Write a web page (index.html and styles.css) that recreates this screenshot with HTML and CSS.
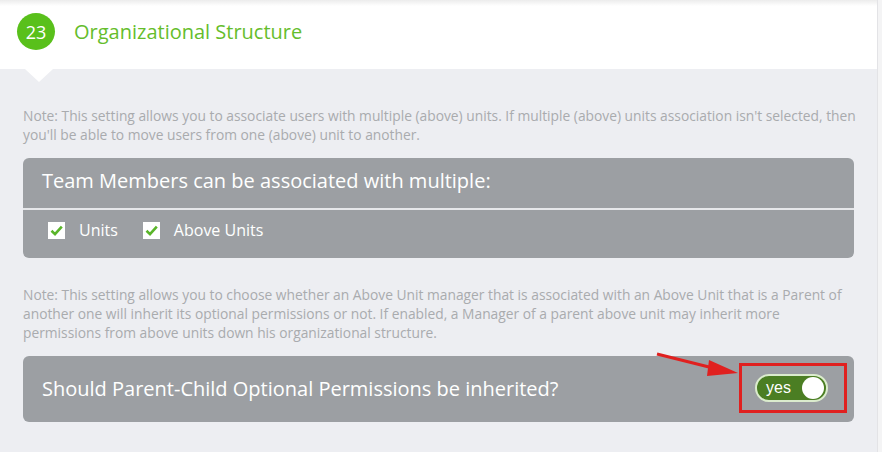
FILE: index.html
```html
<!DOCTYPE html>
<html lang="en">
<head>
    <meta charset="UTF-8">
    <meta name="viewport" content="width=device-width, initial-scale=1.0">
    <title>Organizational Structure</title>
    <link rel="stylesheet" href="styles.css">
</head>
<body>
    <div class="card">
        <div class="card-header">
            <span class="step">23</span>
            <h2>Organizational Structure</h2>
            <span class="notch"></span>
        </div>
        <div class="card-body">
            <p class="note note-first">Note: This setting allows you to associate users with multiple (above) units. If multiple (above) units association isn't selected, then you'll be able to move users from one (above) unit to another.</p>
            <div class="panel">
                <div class="panel-title">Team Members can be associated with multiple:</div>
                <div class="panel-options">
                    <label class="check"><span class="box"><svg viewBox="0 0 17 17" width="17" height="17"><path d="M3.5 8.8 L7 12.2 L13.8 4.6" fill="none" stroke="#5ab52a" stroke-width="2.6"/></svg></span>Units</label>
                    <label class="check"><span class="box"><svg viewBox="0 0 17 17" width="17" height="17"><path d="M3.5 8.8 L7 12.2 L13.8 4.6" fill="none" stroke="#5ab52a" stroke-width="2.6"/></svg></span>Above Units</label>
                </div>
            </div>
            <p class="note note-second">Note: This setting allows you to choose whether an Above Unit manager that is associated with an Above Unit that is a Parent of another one will inherit its optional permissions or not. If enabled, a Manager of a parent above unit may inherit more permissions from above units down his organizational structure.</p>
            <div class="panel panel-row">
                <div class="panel-title">Should Parent-Child Optional Permissions be inherited?</div>
                <div class="highlight">
                    <div class="toggle">
                        <span>yes</span>
                        <span class="knob"></span>
                    </div>
                </div>
                <svg class="arrow" width="90" height="30" viewBox="0 0 90 30">
                    <line x1="2" y1="2" x2="62" y2="17" stroke="#e0201f" stroke-width="3"/>
                    <polygon points="83,21 54,8 52,24" fill="#e0201f"/>
                </svg>
            </div>
        </div>
    </div>
</body>
</html>
```

FILE: styles.css
```css
body {
    margin: 0;
    padding: 0;
    background: #f4f4f5;
    font-family: 'Open Sans', sans-serif;
}
.card {
    width: 877px;
    border-right: 1px solid #e3e3e6;
    background: #edeef2;
    height: 452px;
}
.card-header {
    position: relative;
    height: 69px;
    background: linear-gradient(#ececec, #ffffff 6px);
    display: flex;
    align-items: center;
    padding-left: 17px;
    box-sizing: border-box;
}
.step {
    width: 38px;
    height: 37px;
    border-radius: 50%;
    background: #59c01b;
    color: white;
    font-size: 18px;
    display: flex;
    justify-content: center;
    align-items: center;
    margin-top: -6px;
}
.card-header h2 {
    margin: -6px 0 0 19px;
    font-size: 20px;
    font-weight: normal;
    color: #65bd2c;
}
.notch {
    position: absolute;
    left: 25px;
    top: 69px;
    width: 0;
    height: 0;
    border-left: 14px solid transparent;
    border-right: 14px solid transparent;
    border-top: 13px solid white;
}
.card-body {
    padding: 37px 23px 0 23px;
}
.note {
    margin: 0;
    font-size: 13.8px;
    line-height: 19px;
    color: #a9abae;
}
.note-first {
    margin-right: -10px;
}
.note-second {
    margin-top: 27px;
}
.panel {
    margin-top: 14px;
    background: #9c9fa3;
    border-radius: 6px;
    color: white;
}
.panel-title {
    font-size: 20px;
    padding: 0 19px;
    height: 50px;
    line-height: 46px;
}
.panel-options {
    border-top: 2px solid #e6e7ea;
    height: 50px;
    display: flex;
    align-items: center;
    padding: 0 0 8px 25px;
    box-sizing: border-box;
    font-size: 16px;
}
.check {
    display: flex;
    align-items: center;
    margin-right: 25px;
}
.box {
    width: 17px;
    height: 17px;
    background: white;
    margin-right: 14px;
    display: flex;
}
.panel-row {
    position: relative;
    height: 66px;
    display: flex;
    align-items: center;
    justify-content: space-between;
}
.panel-row .panel-title {
    height: auto;
    line-height: 26px;
    margin-top: -1px;
}
.highlight {
    border: 3px solid #e0201f;
    width: 108px;
    height: 50px;
    margin-right: 7px;
    margin-top: -2px;
    display: flex;
    align-items: center;
    padding-left: 13px;
    box-sizing: border-box;
}
.toggle {
    width: 73px;
    height: 28px;
    box-sizing: border-box;
    border: 2px solid #dbeccd;
    border-radius: 14px;
    background: #4b7e23;
    display: flex;
    align-items: center;
    justify-content: space-between;
    padding: 0 2px 0 9px;
    font-family: 'Liberation Sans', Arial, sans-serif;
    font-size: 16px;
    color: white;
}
.knob {
    width: 22px;
    height: 22px;
    border-radius: 50%;
    background: white;
}
.arrow {
    position: absolute;
    left: 632px;
    top: -4px;
}
```
